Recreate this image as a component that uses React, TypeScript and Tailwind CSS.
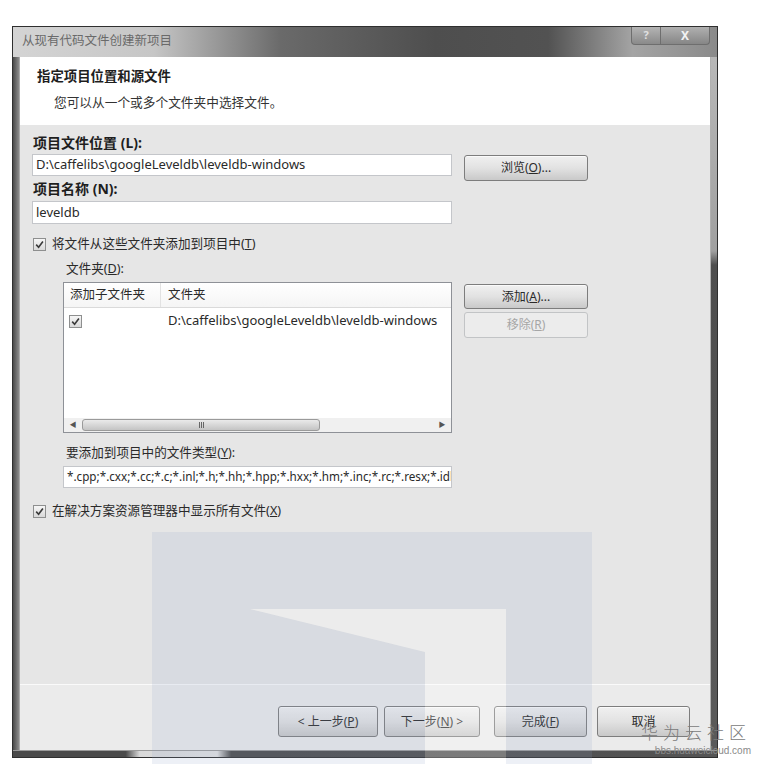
import React from "react";

function Check() {
	return (
		<span className="inline-flex h-[13px] w-[13px] shrink-0 items-center justify-center border border-[#8e8f8f] bg-gradient-to-b from-[#f6f6f6] to-[#d9d9d9]">
			<svg width="9" height="9" viewBox="0 0 9 9">
				<path d="M1.2 4.6 L3.6 7.2 L7.9 1.4" stroke="#3a3a3a" strokeWidth="1.6" fill="none" />
			</svg>
		</span>
	);
}

function Btn({ children, w, h = 26, disabled = false }: { children: React.ReactNode; w: number; h?: number; disabled?: boolean }) {
	return (
		<div
			style={{ width: w, height: h }}
			className={
				disabled
					? "flex items-center justify-center rounded-[3px] border border-[#c2c4c6] bg-[#ececec] text-[12px] text-[#a6a6a6]"
					: "flex items-center justify-center rounded-[3px] border border-[#7d7d7d] bg-gradient-to-b from-[#f0f0f0] via-[#e2e2e2] to-[#c9c9c9] text-[12px] text-[#2a2a2a] shadow-[inset_0_1px_0_#fafafa]"
			}
		>
			{children}
		</div>
	);
}

function Field({ children, w, h = 22, size = "text-[13px]" }: { children: React.ReactNode; w: number; h?: number; size?: string }) {
	return (
		<div
			style={{ width: w, height: h }}
			className={"flex items-center overflow-hidden whitespace-nowrap border border-[#c4c6ca] bg-white pl-[3px] text-[#2a2a2a] " + size}
		>
			{children}
		</div>
	);
}

export default function App() {
	return (
		<div className="relative h-[764px] w-[763px] overflow-hidden bg-white font-['Noto_Sans','Noto_Sans_CJK_SC',sans-serif] text-[#2a2a2a]">
			<div className="ml-[12px] mt-[26px] flex h-[732px] w-[706px] flex-col border border-[#2f2f2f] bg-[#575757]">
				{/* title bar */}
				<div className="flex h-[30px] items-start justify-between bg-[linear-gradient(90deg,#d4d4d4_0%,#c6c6c6_20%,#6a6a6a_38%,#4e4e4e_60%,#525252_76%,#a4a4a4_88%,#8a8a8a_100%)] pl-[9px] pr-[7px]">
					<span className="pt-[6px] text-[12.5px] leading-[16px] text-[#6a6a6a]">从现有代码文件创建新项目</span>
					<div className="flex">
						<div className="flex h-[18px] w-[30px] items-center justify-center rounded-bl-[4px] border border-t-0 border-[#6e6e6e] bg-gradient-to-b from-[#b4b4b4] to-[#8a8a8a] text-[11px] font-bold text-[#e0e0e0]">
							?
						</div>
						<div className="flex h-[18px] w-[49px] items-center justify-center rounded-br-[4px] border border-l-0 border-t-0 border-[#6e6e6e] bg-gradient-to-b from-[#b0b0b0] to-[#868686] text-[12px] font-bold text-[#f2f2f2]">
							X
						</div>
					</div>
				</div>

				<div className="flex flex-1">
					<div className="w-[7px] border-r border-[#a8a8a8] bg-gradient-to-r from-[#4a4a4a] to-[#8c8c8c]" />

					{/* client */}
					<div className="flex flex-1 flex-col bg-[#e6e6e6]">
						<div className="h-[68px] bg-white pl-[17px] pt-[9px]">
							<div className="text-[13.4px] font-bold leading-[20px] text-[#1e1e1e]">指定项目位置和源文件</div>
							<div className="ml-[17px] mt-[8px] text-[12.7px] leading-[16px] text-[#333]">您可以从一个或多个文件夹中选择文件。</div>
						</div>

						<div className="flex flex-1 flex-col px-[12px] pt-[10px]">
							<div className="pl-[1px] text-[14px] font-bold leading-[16px] text-[#1e1e1e]">项目文件位置 (L):</div>
							<div className="mt-[3px] flex items-start gap-[12px]">
								<Field w={420}>D:\caffelibs\googleLeveldb\leveldb-windows</Field>
								<div className="mt-[1px]">
									<Btn w={124}>浏览(<u>O</u>)...</Btn>
								</div>
							</div>
							<div className="mt-[0px] pl-[1px] text-[14px] font-bold leading-[16px] text-[#1e1e1e]">项目名称 (N):</div>
							<div className="mt-[4px]">
								<Field w={420} h={23}>leveldb</Field>
							</div>

							<div className="mt-[12px] flex items-center gap-[6px] pl-[1px] text-[12.6px] leading-[16px]">
								<Check />
								<span>将文件从这些文件夹添加到项目中(<u>T</u>)</span>
							</div>

							<div className="ml-[34px] mt-[9px] text-[12.6px] leading-[16px]">
								文件夹(<u>D</u>):
							</div>

							<div className="ml-[31px] mt-[5px] flex items-start gap-[12px]">
								<div className="flex h-[151px] w-[389px] flex-col border border-[#8e9197] bg-white">
									<div className="flex h-[25px] border-b border-[#dadada] bg-gradient-to-b from-white to-[#f5f5f5] text-[12.5px]">
										<div className="flex w-[97px] items-center border-r border-[#e2e2e2] pl-[6px]">添加子文件夹</div>
										<div className="flex items-center pl-[7px]">文件夹</div>
									</div>
									<div className="mt-[2px] flex h-[22px] items-center text-[13px]">
										<div className="flex w-[97px] pl-[5px]">
											<Check />
										</div>
										<div className="whitespace-nowrap pl-[7px]">D:\caffelibs\googleLeveldb\leveldb-windows</div>
									</div>
									<div className="flex-1" />
									<div className="flex h-[14px] items-center bg-[#f0f0f0] px-[3px]">
										<span className="w-[12px] text-center text-[7px] text-[#555]">◀</span>
										<div className="ml-[3px] flex h-[12px] w-[238px] items-center justify-center rounded-[3px] border border-[#9a9a9a] bg-gradient-to-b from-[#eaeaea] to-[#c4c4c4]">
											<div className="flex gap-[1px]">
												<span className="h-[6px] w-[1px] bg-[#666]" />
												<span className="h-[6px] w-[1px] bg-[#666]" />
												<span className="h-[6px] w-[1px] bg-[#666]" />
											</div>
										</div>
										<div className="flex-1" />
										<span className="w-[12px] text-center text-[7px] text-[#555]">▶</span>
									</div>
								</div>
								<div className="mt-[2px] flex flex-col gap-[3px]">
									<Btn w={124} h={25}>添加(<u>A</u>)...</Btn>
									<Btn w={124} disabled>移除(<u>R</u>)</Btn>
								</div>
							</div>

							<div className="ml-[34px] mt-[12px] text-[12.6px] leading-[16px]">
								要添加到项目中的文件类型(<u>Y</u>):
							</div>
							<div className="ml-[31px] mt-[5px]">
								<Field w={389} size="text-[11.7px]">*.cpp;*.cxx;*.cc;*.c;*.inl;*.h;*.hh;*.hpp;*.hxx;*.hm;*.inc;*.rc;*.resx;*.idl;*.rc2</Field>
							</div>

							<div className="mt-[15px] flex items-center gap-[6px] pl-[1px] text-[12.6px] leading-[16px]">
								<Check />
								<span>在解决方案资源管理器中显示所有文件(<u>X</u>)</span>
							</div>
						</div>

						<div className="h-[1px] bg-[#fafafa]" />
						<div className="flex h-[65px] justify-end bg-[#ebebeb] pr-[20px] pt-[21px]">
							<div className="flex items-start">
								<Btn w={100} h={31}>&lt; 上一步(<u>P</u>)</Btn>
								<div className="ml-[6px]">
									<Btn w={96} h={31}>下一步(<u>N</u>) &gt;</Btn>
								</div>
								<div className="ml-[14px]">
									<Btn w={93} h={31}>完成(<u>F</u>)</Btn>
								</div>
								<div className="ml-[10px]">
									<Btn w={93} h={31}>取消</Btn>
								</div>
							</div>
						</div>
					</div>

					<div className="w-[7px] border-l border-[#b0b0b0] bg-[linear-gradient(180deg,#b8b8b8_0%,#a0a0a0_28%,#4e4e4e_30%,#5a5a5a_100%)]" />
				</div>
				<div className="h-[7px] border-t border-[#9a9a9a] bg-[linear-gradient(90deg,#4a4a4a_0%,#4a4a4a_16%,#d8d8d8_18%,#e2e2e2_29%,#4a4a4a_31%,#555_100%)]" />
			</div>

			{/* scanned-page watermark */}
			<svg className="pointer-events-none absolute left-[152px] top-[532px]" width="440" height="232" viewBox="0 0 440 232">
				<path
					d="M0 0 H440 V232 H0 Z M98 77 H354 V232 H273 V120 Z"
					fillRule="evenodd"
					fill="#8f9fc8"
					fillOpacity="0.16"
				/>
				<path d="M98 77 H354 V232 H273 V120 Z" fill="#ffffff" fillOpacity="0.25" />
			</svg>

			<div className="pointer-events-none absolute right-[12px] top-[722px] flex flex-col items-end whitespace-nowrap">
				<span className="text-[17px] font-light leading-[22px] tracking-[5px] text-[#7a7a7a]">华为云社区</span>
				<span className="mt-[1px] font-['Liberation_Sans',sans-serif] text-[10px] leading-[11px] text-[#8a8a8a]">bbs.huaweicloud.com</span>
			</div>
		</div>
	);
}
